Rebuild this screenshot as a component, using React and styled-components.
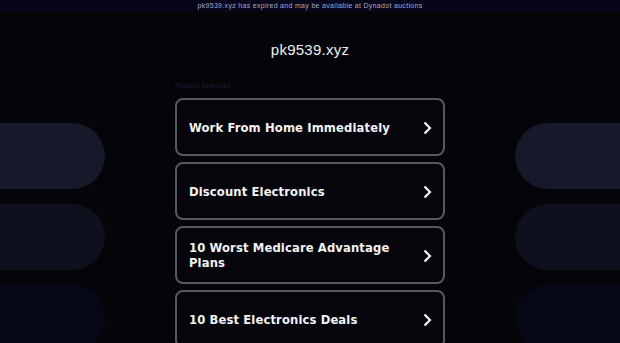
import React from "react";
import styled, { createGlobalStyle } from "styled-components";

const Global = createGlobalStyle`
  html, body { margin: 0; padding: 0; background: #040409; overflow: hidden; }
  body { width: 620px; height: 343px; }
`;

const Page = styled.div`
  width: 620px;
  height: 343px;
  overflow: hidden;
  background: #040409;
  font-family: "DejaVu Sans", sans-serif;
`;

const TopBar = styled.div`
  height: 12px;
  background: #06051a;
  color: #a9a9c6;
  font-family: "Liberation Sans", Arial, sans-serif;
  font-size: 7px;
  line-height: 12px;
  text-align: center;
  letter-spacing: 0.31px;
`;

const Layout = styled.div`
  display: grid;
  grid-template-columns: 105px 270px 105px;
  justify-content: space-between;
`;

const Side = styled.div`
  display: flex;
  flex-direction: column;
  gap: 15px;
  padding-top: 111px;
`;

const Pill = styled.div`
  height: 66px;
  background: ${(p) => p.$bg};
  border-radius: ${(p) => (p.$right ? "33px 0 0 33px" : "0 33px 33px 0")};
`;

const Center = styled.div`
  display: flex;
  flex-direction: column;
`;

const Title = styled.h1`
  margin: 0;
  padding-top: 29px;
  font-family: "Liberation Sans", Arial, sans-serif;
  font-weight: normal;
  font-size: 15px;
  line-height: 18px;
  color: #ededf2;
  text-align: center;
  letter-spacing: 0.25px;
`;

const Label = styled.div`
  margin-top: 22px;
  font-family: "Liberation Sans", Arial, sans-serif;
  font-size: 7px;
  line-height: 9px;
  color: #1b1b34;
`;

const List = styled.div`
  margin-top: 8px;
  display: flex;
  flex-direction: column;
  gap: 6px;
`;

const Card = styled.a`
  box-sizing: border-box;
  height: 58px;
  display: flex;
  align-items: center;
  justify-content: space-between;
  padding: 2px 11px 0 12px;
  border: 2px solid #58585e;
  border-radius: 8px;
  background: #05050b;
  color: #f2f2f2;
  text-decoration: none;
`;

const CardText = styled.span`
  font-family: "DejaVu Sans", Verdana, sans-serif;
  font-weight: bold;
  font-size: 11.6px;
  line-height: 15px;
  letter-spacing: 0.12px;
  max-width: 215px;
`;

const Chevron = () => (
  <svg width="10" height="14" viewBox="0 0 10 14" aria-hidden="true">
    <polyline points="2.5,1.5 8,7 2.5,12.5" fill="none" stroke="#f2f2f2" strokeWidth="2.2" />
  </svg>
);

const items = [
  "Work From Home Immediately",
  "Discount Electronics",
  "10 Worst Medicare Advantage Plans",
  "10 Best Electronics Deals",
];

const pillColors = ["#151929", "#0e101e", "#070817"];

export default function App() {
  return (
    <Page>
      <Global />
      <TopBar>pk9539.xyz has expired and may be available at Dynadot auctions</TopBar>
      <Layout>
        <Side>
          {pillColors.map((c) => (
            <Pill key={c} $bg={c} />
          ))}
        </Side>
        <Center>
          <Title>pk9539.xyz</Title>
          <Label>Related Searches</Label>
          <List>
            {items.map((t) => (
              <Card key={t} href="#">
                <CardText>{t}</CardText>
                <Chevron />
              </Card>
            ))}
          </List>
        </Center>
        <Side>
          {pillColors.map((c) => (
            <Pill key={c} $bg={c} $right />
          ))}
        </Side>
      </Layout>
    </Page>
  );
}
